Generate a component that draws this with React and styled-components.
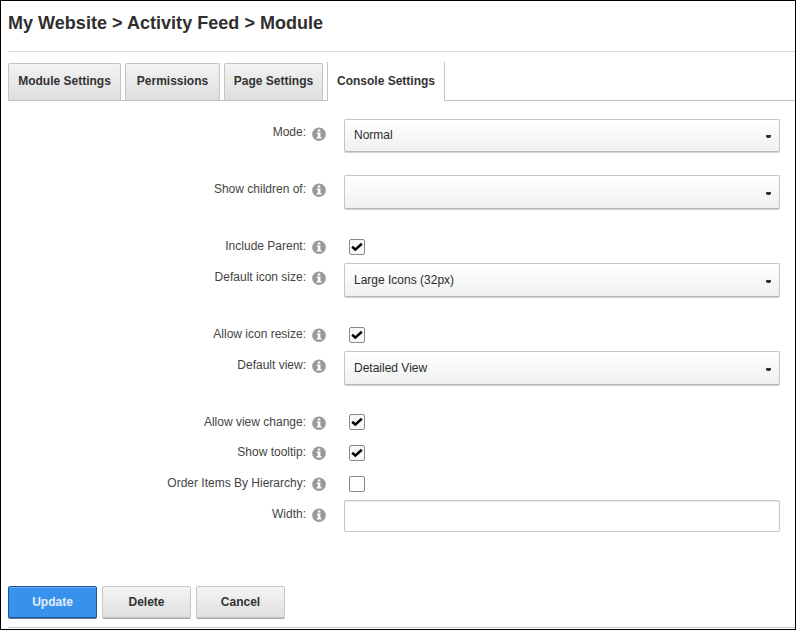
import React from "react";
import styled, { createGlobalStyle, css } from "styled-components";

const GlobalStyle = createGlobalStyle`
  * { box-sizing: border-box; }
  body { margin: 0; background: #fff; font-family: "Liberation Sans", Arial, sans-serif; color: #333; }
`;

const Window = styled.main`
  width: 796px;
  height: 630px;
  border: 1px solid #000;
  padding-left: 7px;
  overflow: hidden;
  display: flex;
  flex-direction: column;
`;

const Title = styled.h1`
  flex: none;
  margin: 0;
  height: 51px;
  padding-top: 10px;
  border-bottom: 1px solid #ddd;
  font-size: 18px;
  line-height: 24px;
  letter-spacing: 0.03px;
  color: #2f2f2f;
`;

const TabBar = styled.nav`
  flex: none;
  display: flex;
  height: 39px;
  margin-top: 10px;
`;

const TabSlot = styled.div`
  display: flex;
  width: ${(p) => p.$width}px;
  padding-top: 1px;
  border-bottom: 1px solid #c4c4c4;
`;

const tabText = css`
  padding: 0 0 2px;
  font: bold 12px/16px "Liberation Sans", Arial, sans-serif;
  color: #333;
  white-space: nowrap;
`;

const Tab = styled.button`
  ${tabText}
  width: ${(p) => p.$width}px;
  height: 37px;
  border: 1px solid #c4c4c4;
  border-bottom: 0;
  border-radius: 2px 2px 0 0;
  background: linear-gradient(#f3f3f3, #dedede);
`;

const ActiveTab = styled.button`
  ${tabText}
  width: 118px;
  height: 39px;
  border: solid #c4c4c4;
  border-width: 0 1px;
  background: #fff;
`;

const TabRule = styled.div`
  flex: 1;
  border-bottom: 1px solid #c4c4c4;
`;

const Form = styled.form`
  flex: none;
  display: flex;
  flex-direction: column;
  height: 485px;
  padding-top: 18px;
`;

const Row = styled.div`
  flex: none;
  display: grid;
  grid-template-columns: 298px 14px 448px;
  column-gap: 6px;
  align-items: start;
  height: ${(p) => p.$height}px;
`;

const Label = styled.label`
  padding-top: ${(p) => p.$top}px;
  font-size: 12px;
  line-height: 16px;
  text-align: right;
  color: #444;
`;

const InfoIcon = styled.svg`
  display: block;
  width: 14px;
  height: 14px;
  margin-top: 8px;
`;

const Control = styled.div`
  padding-left: 12px;
`;

const Select = styled.button`
  display: flex;
  align-items: center;
  justify-content: space-between;
  width: 436px;
  height: ${(p) => p.$height}px;
  padding: 0 8px ${(p) => (p.$height > 33 ? 0 : 2)}px 9px;
  border: 1px solid #c6c6c6;
  border-bottom-color: #b7b7b7;
  border-radius: 2px;
  background: linear-gradient(#fff, #eff0f0);
  box-shadow: 0 1px 0 #d2d2d2;
  font: 12px/16px "Liberation Sans", Arial, sans-serif;
  color: #2c2c2c;
`;

const Caret = styled.svg`
  display: block;
  width: 5px;
  height: 3px;
  margin-top: ${(p) => p.$top}px;
`;

const CheckBox = styled.span`
  display: grid;
  place-items: center;
  width: 16px;
  height: 16px;
  margin: ${(p) => p.$top}px 0 0 5px;
  border: 1px solid #8a8a8a;
  border-radius: 2px;
  background: ${(p) => (p.$checked ? "#f7f7f7" : "#fff")};
`;

const TextInput = styled.input`
  display: block;
  width: 436px;
  height: 32px;
  border: 1px solid #c6c6c6;
  border-radius: 2px;
  box-shadow: inset 0 1px 1px #e9e9e9;
  outline: 0;
`;

const Actions = styled.footer`
  flex: none;
  display: flex;
  gap: 5px;
  height: 42px;
  border-bottom: 1px solid #c9c9c9;
`;

const ActionButton = styled.button`
  width: 89px;
  height: 32px;
  padding: 0;
  border: 1px solid ${(p) => (p.$primary ? "#17589b" : "#c6c6c6")};
  border-radius: 2px;
  background: ${(p) => (p.$primary ? "#3792ed" : "linear-gradient(#f5f5f5, #dfdfdf)")};
  box-shadow: 0 1px 0 ${(p) => (p.$primary ? "#64798e, inset 0 1px 0 #6bafef" : "#a9a9a9")};
  font: bold 12px/16px "Liberation Sans", Arial, sans-serif;
  color: ${(p) => (p.$primary ? "#e3edf7" : "#333")};
`;

const rows = [
  { label: "Mode:", kind: "select", value: "Normal", height: 56, size: 33, labelTop: 5 },
  { label: "Show children of:", kind: "select", value: "", height: 57, size: 34, labelTop: 6 },
  { label: "Include Parent:", kind: "check", checked: true, height: 31, checkTop: 7, labelTop: 6 },
  { label: "Default icon size:", kind: "select", value: "Large Icons (32px)", height: 57, size: 34, labelTop: 6 },
  { label: "Allow icon resize:", kind: "check", checked: true, height: 31, checkTop: 7, labelTop: 6 },
  { label: "Default view:", kind: "select", value: "Detailed View", height: 57, size: 34, labelTop: 6 },
  { label: "Allow view change:", kind: "check", checked: true, height: 30, checkTop: 6, labelTop: 6 },
  { label: "Show tooltip:", kind: "check", checked: true, height: 31, checkTop: 7, labelTop: 6 },
  { label: "Order Items By Hierarchy:", kind: "check", checked: false, height: 31, checkTop: 7, labelTop: 6 },
  { label: "Width:", kind: "text", height: 32, labelTop: 6 },
];

function Field({ row }) {
  if (row.kind === "select") {
    return (
      <Select type="button" $height={row.size}>
        <span>{row.value}</span>
        <Caret viewBox="0 0 5 3" $top={row.size > 33 ? 3 : 4}>
          <path d="M0 0h5v1.4L3.8 3H1.2L0 1.4z" fill="#333" />
        </Caret>
      </Select>
    );
  }
  if (row.kind === "check") {
    return (
      <CheckBox role="checkbox" aria-checked={row.checked} $checked={row.checked} $top={row.checkTop}>
        {row.checked && (
          <svg width="12" height="10" viewBox="0 0 12 10">
            <path d="M1.2 4.8 4.3 7.6 10.8 1.8" fill="none" stroke="#000" strokeWidth="2.5" />
          </svg>
        )}
      </CheckBox>
    );
  }
  return <TextInput type="text" aria-label={row.label} />;
}

export default function App() {
  return (
    <>
      <GlobalStyle />
      <Window>
        <Title>My Website &gt; Activity Feed &gt; Module</Title>
        <TabBar>
          <TabSlot $width={117}><Tab $width={113}>Module Settings</Tab></TabSlot>
          <TabSlot $width={99}><Tab $width={95}>Permissions</Tab></TabSlot>
          <TabSlot $width={103}><Tab $width={99}>Page Settings</Tab></TabSlot>
          <ActiveTab>Console Settings</ActiveTab>
          <TabRule />
        </TabBar>
        <Form>
          {rows.map((row) => (
            <Row key={row.label} $height={row.height}>
              <Label $top={row.labelTop}>{row.label}</Label>
              <InfoIcon viewBox="0 0 14 14">
                <circle cx="7" cy="7.2" r="6.8" fill="#999" />
                <path d="M5.8 2.5h2.5v2H5.8zM4.9 5.5h3.5v4.5h1v1.6H4.7V10h1.1V7.1h-.9z" fill="#fff" />
              </InfoIcon>
              <Control><Field row={row} /></Control>
            </Row>
          ))}
        </Form>
        <Actions>
          <ActionButton $primary>Update</ActionButton>
          <ActionButton>Delete</ActionButton>
          <ActionButton>Cancel</ActionButton>
        </Actions>
      </Window>
    </>
  );
}
